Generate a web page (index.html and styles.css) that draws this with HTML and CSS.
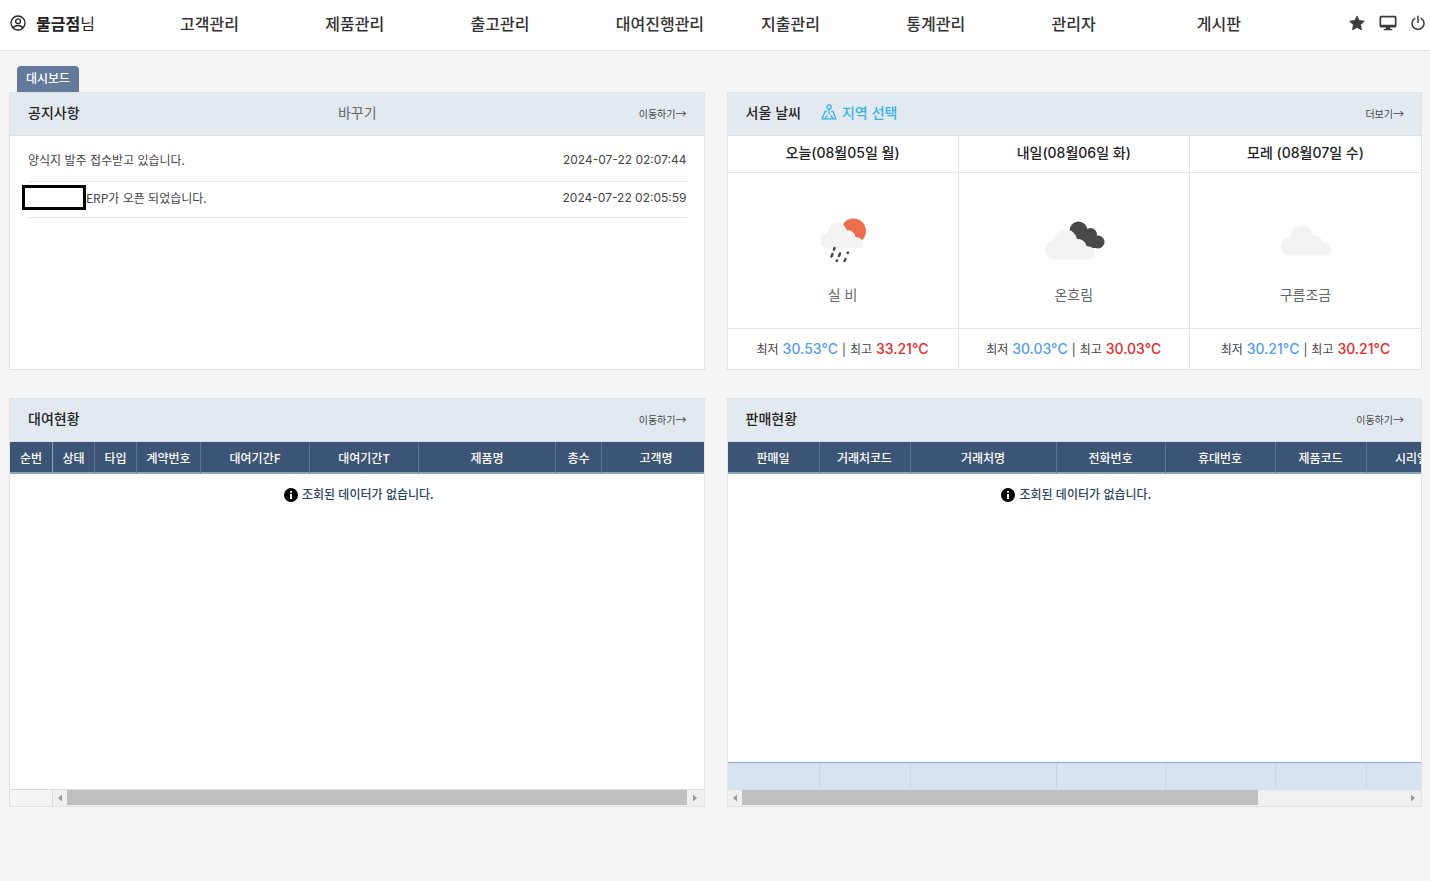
FILE: index.html
```html
<!DOCTYPE html>
<html lang="ko">
<head>
<meta charset="utf-8">
<title>대시보드</title>
<link rel="stylesheet" href="styles.css">
</head>
<body>
<header class="topbar">
  <div class="user">
    <svg class="user-icon" viewBox="0 0 16 16" fill="none" stroke="currentColor" stroke-width="1.3" aria-hidden="true"><circle cx="8" cy="8" r="7"/><circle cx="8" cy="6.3" r="2.4"/><path d="M3.3 12.9c.8-1.7 2.5-2.4 4.7-2.4s3.9.7 4.7 2.4"/></svg>
    <span><strong>물금점</strong>님</span>
  </div>
  <nav class="menu">
    <a href="#">고객관리</a><a href="#">제품관리</a><a href="#">출고관리</a><a href="#">대여진행관리</a><a href="#">지출관리</a><a href="#">통계관리</a><a href="#">관리자</a><a href="#">게시판</a>
  </nav>
  <div class="tools">
    <button type="button" aria-label="즐겨찾기"><svg width="16" height="16" viewBox="0 0 16 16" fill="currentColor"><path d="M8 .9l2.2 4.6 5.1.7-3.700 3.500.9 5.100L8 12.400l-4.500 2.400.9-5.100L.7 6.200l5.100-.7z" stroke="currentColor" stroke-width=".8" stroke-linejoin="round"/></svg></button>
    <button type="button" aria-label="화면"><svg width="18" height="16" viewBox="0 0 18 16"><path fill="currentColor" fill-rule="evenodd" d="M2 .8h14A1.500 1.500 0 0 1 17.500 2.300v8.700a1.500 1.500 0 0 1-1.500 1.500h-5l.5 1.500h1.300a.6.6 0 0 1 0 1.300H5.200a.6.6 0 0 1 0-1.300h1.300l.5-1.500H2A1.500 1.500 0 0 1 .5 11V2.300A1.500 1.500 0 0 1 2 .8zM2.200 2.500v7.200h13.600V2.500z"/></svg></button>
    <button type="button" aria-label="로그아웃"><svg width="14" height="16" viewBox="0 0 14 16" fill="none" stroke="currentColor" stroke-width="1.500" stroke-linecap="round"><path d="M7 1.300v6.200M3.800 3.300a6 6 0 1 0 6.400 0"/></svg></button>
  </div>
</header>

<main class="page">
  <div class="tabs"><a class="tab" href="#">대시보드</a></div>
  <div class="board">
    <section class="panel">
      <div class="panel-head">
        <h2>공지사항</h2>
        <button class="swap" type="button">바꾸기</button>
        <a class="more" href="#">이동하기<span class="arrow">→</span></a>
      </div>
      <ul class="notices">
        <li><a href="#">양식지 발주 접수받고 있습니다.</a><time>2024-07-22 02:07:44</time></li>
        <li><a href="#"><span class="mask"></span>ERP가 오픈 되었습니다.</a><time>2024-07-22 02:05:59</time></li>
      </ul>
    </section>

    <section class="panel">
      <div class="panel-head">
        <div class="head-group">
          <h2>서울 날씨</h2>
          <a class="region" href="#"><svg width="16" height="16" viewBox="0 0 16 16" fill="none" stroke="currentColor" stroke-width="1.300" aria-hidden="true"><circle cx="8" cy="3" r="2.100"/><path d="M8 5.200v5.300M5.800 7.500H4L1.200 14.800h13.600L12 7.500h-1.800M4 14l2.500-2.500M9.500 11.500L12 14"/></svg>지역 선택</a>
        </div>
        <a class="more" href="#">더보기<span class="arrow">→</span></a>
      </div>
      <div class="forecast">
        <article class="day">
          <h3>오늘(08월05일 월)</h3>
          <div class="sky">
            <svg width="64" height="52" viewBox="0 0 64 52" aria-hidden="true"><circle cx="42.500" cy="18" r="12.500" fill="#ec6e4c"/><path d="M19 34a8.500 8.500 0 0 1-1-16A8.500 8.500 0 0 1 34 14q1.500 1.500 1.800 3.500A7 7 0 0 1 44 23.500q7.500 1.500 7.500 6A5 5 0 0 1 47 34z" fill="#f2f2f2"/><path d="M17 35.500A7.500 7.500 0 0 1 17.500 20A8.500 8.500 0 0 1 33.500 15q.8 1.500 1 3.500A6.500 6.500 0 0 1 44 24.500q8 .5 8 6a5 5 0 0 1-5 5z" fill="#f2f2f2"/><path d="M23.500 35l-.5 1.500M21.500 41l-1 2.500M29 40.500l-1 2.500M26 47.500l-.2.500M37 39.500l-.3.500M34.500 46l-1 2" stroke="#484848" stroke-width="2.500" stroke-linecap="round"/></svg>
            <p>실 비</p>
          </div>
          <p class="temps"><small>최저</small> <span class="low">30.53°C</span> <small>|</small> <small>최고</small> <span class="high">33.21°C</span></p>
        </article>
        <article class="day">
          <h3>내일(08월06일 화)</h3>
          <div class="sky">
            <svg width="64" height="52" viewBox="1 -1 64 52" aria-hidden="true"><g fill="#484848"><circle cx="37.500" cy="16.500" r="9"/><circle cx="49.500" cy="20.500" r="6.500"/><circle cx="57" cy="28" r="6.500"/><path d="M38 10l18 24H40z"/></g><path id="cloud" d="M11 45.500A10 10 0 0 1 13.500 26A11.500 11.500 0 0 1 34.500 21q1.300 2 1.500 4.500A8 8 0 0 1 45.500 32q8.500.5 8.500 7a6.500 6.500 0 0 1-6.500 6.500z" fill="#f2f2f2"/></svg>
            <p>온흐림</p>
          </div>
          <p class="temps"><small>최저</small> <span class="low">30.03°C</span> <small>|</small> <small>최고</small> <span class="high">30.03°C</span></p>
        </article>
        <article class="day">
          <h3>모레 (08월07일 수)</h3>
          <div class="sky">
            <svg width="64" height="52" viewBox="-4 3 64 52" aria-hidden="true"><use href="#cloud"/></svg>
            <p>구름조금</p>
          </div>
          <p class="temps"><small>최저</small> <span class="low">30.21°C</span> <small>|</small> <small>최고</small> <span class="high">30.21°C</span></p>
        </article>
      </div>
    </section>

    <section class="panel">
      <div class="panel-head">
        <h2>대여현황</h2>
        <a class="more" href="#">이동하기<span class="arrow">→</span></a>
      </div>
      <div class="grid">
        <div class="grid-view">
          <table class="rent">
            <colgroup><col class="w43"><col class="w42"><col class="w42"><col class="w64"><col class="w109"><col class="w109"><col class="w137"><col class="w46"><col class="w109"></colgroup>
            <thead><tr><th class="fixed">순번</th><th>상태</th><th>타입</th><th>계약번호</th><th>대여기간F</th><th>대여기간T</th><th>제품명</th><th>총수</th><th>고객명</th></tr></thead>
          </table>
        </div>
        <p class="empty"><svg width="14" height="14" viewBox="0 0 14 14" aria-hidden="true"><circle cx="7" cy="7" r="7"/><path d="M7 3v1.800M7 6v5" stroke="#fff" stroke-width="1.900"/></svg>조회된 데이터가 없습니다.</p>
        <div class="scroll">
          <span class="scroll-fixed"></span>
          <button type="button" aria-label="왼쪽으로"><svg width="4" height="8" viewBox="0 0 4 8"><path d="M4 .5v7L0 4z"/></svg></button>
          <div class="track"><div class="thumb full"></div></div>
          <button type="button" aria-label="오른쪽으로"><svg width="4" height="8" viewBox="0 0 4 8"><path d="M0 .5v7L4 4z"/></svg></button>
        </div>
      </div>
    </section>

    <section class="panel">
      <div class="panel-head">
        <h2>판매현황</h2>
        <a class="more" href="#">이동하기<span class="arrow">→</span></a>
      </div>
      <div class="grid">
        <div class="grid-view">
          <table class="sale">
            <colgroup><col class="w92"><col class="w91"><col class="w146"><col class="w109"><col class="w110"><col class="w91"><col class="w91"></colgroup>
            <thead><tr><th>판매일</th><th>거래처코드</th><th>거래처명</th><th>전화번호</th><th>휴대번호</th><th>제품코드</th><th>시리얼</th></tr></thead>
          </table>
        </div>
        <p class="empty"><svg width="14" height="14" viewBox="0 0 14 14" aria-hidden="true"><circle cx="7" cy="7" r="7"/><path d="M7 3v1.800M7 6v5" stroke="#fff" stroke-width="1.900"/></svg>조회된 데이터가 없습니다.</p>
        <div class="grid-view">
          <table class="sale totals">
            <colgroup><col class="w92"><col class="w91"><col class="w146"><col class="w109"><col class="w110"><col class="w91"><col class="w91"></colgroup>
            <tbody><tr><td></td><td></td><td></td><td></td><td></td><td></td><td></td></tr></tbody>
          </table>
        </div>
        <div class="scroll">
          <button type="button" aria-label="왼쪽으로"><svg width="4" height="8" viewBox="0 0 4 8"><path d="M4 .5v7L0 4z"/></svg></button>
          <div class="track"><div class="thumb partial"></div></div>
          <button type="button" aria-label="오른쪽으로"><svg width="4" height="8" viewBox="0 0 4 8"><path d="M0 .5v7L4 4z"/></svg></button>
        </div>
      </div>
    </section>
  </div>
</main>
</body>
</html>
```
FILE: styles.css
```css
* { box-sizing: border-box; }
body {
  margin: 0;
  min-height: 100vh;
  background: #f5f5f5;
  color: #444;
  font: 12px/18px "Noto Sans CJK KR", sans-serif;
}
h2, h3, p, ul { margin: 0; padding: 0; }
a { color: inherit; text-decoration: none; }
button { border: 0; padding: 0; background: none; color: inherit; font: inherit; cursor: pointer; }
svg { display: block; flex: none; }

.topbar {
  display: flex;
  align-items: center;
  height: 51px;
  padding: 0 5px 4px 10px;
  background: #fff;
  border-bottom: 1px solid #e3e3e3;
}
.user { display: flex; align-items: center; gap: 10px; flex: 0 0 170px; color: #222; font-size: 16px; line-height: 24px; }
.user-icon { width: 16px; height: 16px; }
.menu { flex: 1; display: grid; grid-template-columns: repeat(8, 1fr); font-size: 16px; font-weight: 500; line-height: 24px; color: #333; white-space: nowrap; }
.tools { display: flex; align-items: center; gap: 14px; padding-left: 7px; color: #3c3c3c; }

.page { padding: 15px 8px 32px 9px; }
.tabs { display: flex; padding-left: 8px; }
.tab { padding: 3px 9px 5px; border-radius: 4px 4px 0 0; background: #637a9c; color: #fff; font-weight: 500; }
.board { display: grid; grid-template-columns: minmax(0, 1fr) minmax(0, 1fr); grid-template-rows: minmax(278px, auto) minmax(409px, auto); gap: 28px 22px; }
.panel { display: flex; flex-direction: column; background: #fff; border: 1px solid #dfe3e6; }
.panel-head {
  display: grid;
  grid-template-columns: 1fr auto 1fr;
  align-items: center;
  height: 43px;
  padding: 0 17px 4px 18px;
  background: #e2eaf0;
  border-bottom: 1px solid #d9e0e6;
}
.panel-head h2 { color: #222; font-size: 14px; font-weight: 500; line-height: 20px; }
.head-group { display: flex; align-items: center; gap: 20px; }
.region { display: flex; align-items: center; gap: 5px; color: #34b2e4; font-size: 14px; font-weight: 500; line-height: 20px; }
.swap { color: #666; font-size: 14px; line-height: 20px; }
.more { grid-column: 3; justify-self: end; padding-top: 3px; font-size: 10px; line-height: 16px; }
.arrow { font-size: 11px; }

.notices { padding: 9px 17px 0 18px; list-style: none; }
.notices li { display: flex; align-items: center; justify-content: space-between; height: 37px; padding-bottom: 6px; border-bottom: 1px solid #e5e5e5; }
.notices li + li { height: 36px; padding-bottom: 4px; }
.notices a { display: flex; align-items: center; }
.notices time { font-family: Inter, sans-serif; font-size: 12px; }
.mask { width: 64px; height: 25px; margin-left: -6px; border: 3px solid #000; background: #fff; }

.forecast { flex: 1; display: grid; grid-template-columns: repeat(3, 1fr); }
.day { display: flex; flex-direction: column; text-align: center; border-right: 1px solid #e5e5e5; }
.day:last-child { border-right: 0; }
.day h3 { height: 37px; padding-top: 7px; border-bottom: 1px solid #e5e5e5; color: #222; font: 500 14px/20px Inter, "Noto Sans CJK KR", sans-serif; }
.sky { flex: 1; display: flex; flex-direction: column; align-items: center; justify-content: center; gap: 19px; padding-top: 15px; color: #666; font-size: 14px; line-height: 20px; }
.temps { height: 41px; padding-top: 10px; border-top: 1px solid #e5e5e5; font: 14px/20px Inter, "Noto Sans CJK KR", sans-serif; }
.temps small { font-size: 12px; }
.low, .high { font-weight: 500; }
.low { color: #559ee8; }
.high { color: #e52a2a; }

.grid { flex: 1; display: flex; flex-direction: column; }
.grid-view { overflow: hidden; }
table { table-layout: fixed; border-collapse: separate; border-spacing: 0; }
.rent { width: 701px; }
.sale { width: 730px; }
.w42 { width: 42px; } .w43 { width: 43px; } .w46 { width: 46px; } .w64 { width: 64px; } .w91 { width: 91px; } .w92 { width: 92px; }
.w109 { width: 109px; } .w110 { width: 110px; } .w137 { width: 137px; } .w146 { width: 146px; }
th {
  height: 32px;
  padding: 2px 0 0;
  background: #3c5475;
  border-right: 1px solid #5c7391;
  border-bottom: 2px solid #86a9b9;
  color: #fff;
  font-weight: 500;
}
.fixed { border-right-color: #8da4bc; }
.totals td { height: 27px; padding: 0; background: #d7e3f1; border-top: 1px solid #8fa7c8; border-right: 1px solid #c9d7e5; }
.empty { flex: 1; display: flex; align-items: flex-start; justify-content: center; gap: 4px; padding: 11px 0 0 4px; color: #2b4560; font-weight: 500; }
.empty svg { margin-top: 3px; }
.scroll { display: flex; height: 17px; background: #f0f0f0; border-top: 1px solid #dcdcdc; }
.scroll-fixed { flex: 0 0 43px; background: #f4f4f4; border-right: 1px solid #dcdcdc; }
.scroll button { display: grid; place-items: center; flex: 0 0 14px; }
.scroll button:last-child { flex-basis: 17px; }
.scroll svg { fill: #999; }
.track { flex: 1; }
.thumb { height: 15px; background: #bfbfbf; }
.full { width: 100%; }
.partial { width: 78%; }
```
